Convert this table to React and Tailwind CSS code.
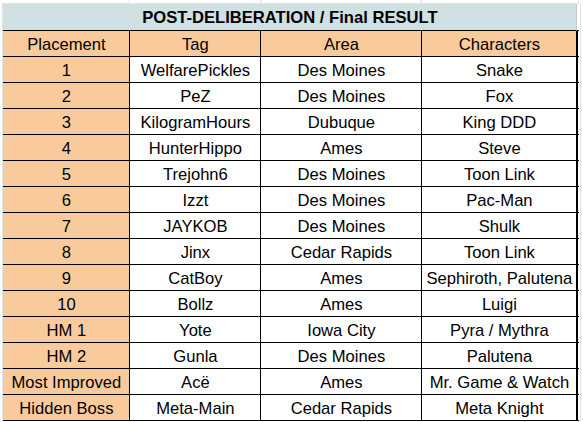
const rows = [
  ['1', 'WelfarePickles', 'Des Moines', 'Snake'],
  ['2', 'PeZ', 'Des Moines', 'Fox'],
  ['3', 'KilogramHours', 'Dubuque', 'King DDD'],
  ['4', 'HunterHippo', 'Ames', 'Steve'],
  ['5', 'Trejohn6', 'Des Moines', 'Toon Link'],
  ['6', 'Izzt', 'Des Moines', 'Pac-Man'],
  ['7', 'JAYKOB', 'Des Moines', 'Shulk'],
  ['8', 'Jinx', 'Cedar Rapids', 'Toon Link'],
  ['9', 'CatBoy', 'Ames', 'Sephiroth, Palutena'],
  ['10', 'Bollz', 'Ames', 'Luigi'],
  ['HM 1', 'Yote', 'Iowa City', 'Pyra / Mythra'],
  ['HM 2', 'Gunla', 'Des Moines', 'Palutena'],
  ['Most Improved', 'Acë', 'Ames', 'Mr. Game & Watch'],
  ['Hidden Boss', 'Meta-Main', 'Cedar Rapids', 'Meta Knight'],
]

const Row = ({ cells, header }) => (
  <div className="flex h-[26px] border-b border-black">
    <div className="w-[127px] flex items-center justify-center pt-[3px] border-r border-black bg-[#f9cb9c]">{cells[0]}</div>
    <div className={`w-[131px] flex items-center justify-center pt-[3px] border-r border-black ${header ? 'bg-[#f9cb9c]' : 'bg-white'}`}>{cells[1]}</div>
    <div className={`w-[161px] flex items-center justify-center pt-[3px] border-r border-black ${header ? 'bg-[#f9cb9c]' : 'bg-white'}`}>{cells[2]}</div>
    <div className={`w-[156px] flex items-center justify-center pt-[3px] border-r-2 border-black ${header ? 'bg-[#f9cb9c]' : 'bg-white'}`}>{cells[3]}</div>
  </div>
)

export default function App() {
  return (
    <div className="w-[583px] h-[422px] bg-white overflow-hidden font-['Liberation_Sans',Arial,sans-serif] text-[16.6px] text-black leading-none">
      {/* spreadsheet gridlines above the table */}
      <div className="flex h-[3px] pl-[3px]">
        <div className="w-[127px] border-r border-[#e2e3e3]" />
        <div className="w-[131px] border-r border-[#e2e3e3]" />
        <div className="w-[161px] border-r border-[#e2e3e3]" />
        <div className="w-[157px] border-r border-[#e2e3e3]" />
      </div>
      <div className="flex">
        <div className="w-[3px]" />
        <div className="border-l border-t border-[#e2e3e3]">
          <div className="flex">
            <div className="w-[574px] h-[27px] flex items-center justify-center pt-[3px] bg-[#d0e0e3] border-r border-[#c6c9ca] border-b border-b-black font-bold">
              POST-DELIBERATION / Final RESULT
            </div>
            <div className="w-[2px] border-b border-black" />
          </div>
          <Row cells={['Placement', 'Tag', 'Area', 'Characters']} header />
          {rows.map((r, i) => <Row key={i} cells={r} />)}
        </div>
        <div className="w-[3px] border-l border-[#e2e3e3] ml-[1px]" />
      </div>
    </div>
  )
}
